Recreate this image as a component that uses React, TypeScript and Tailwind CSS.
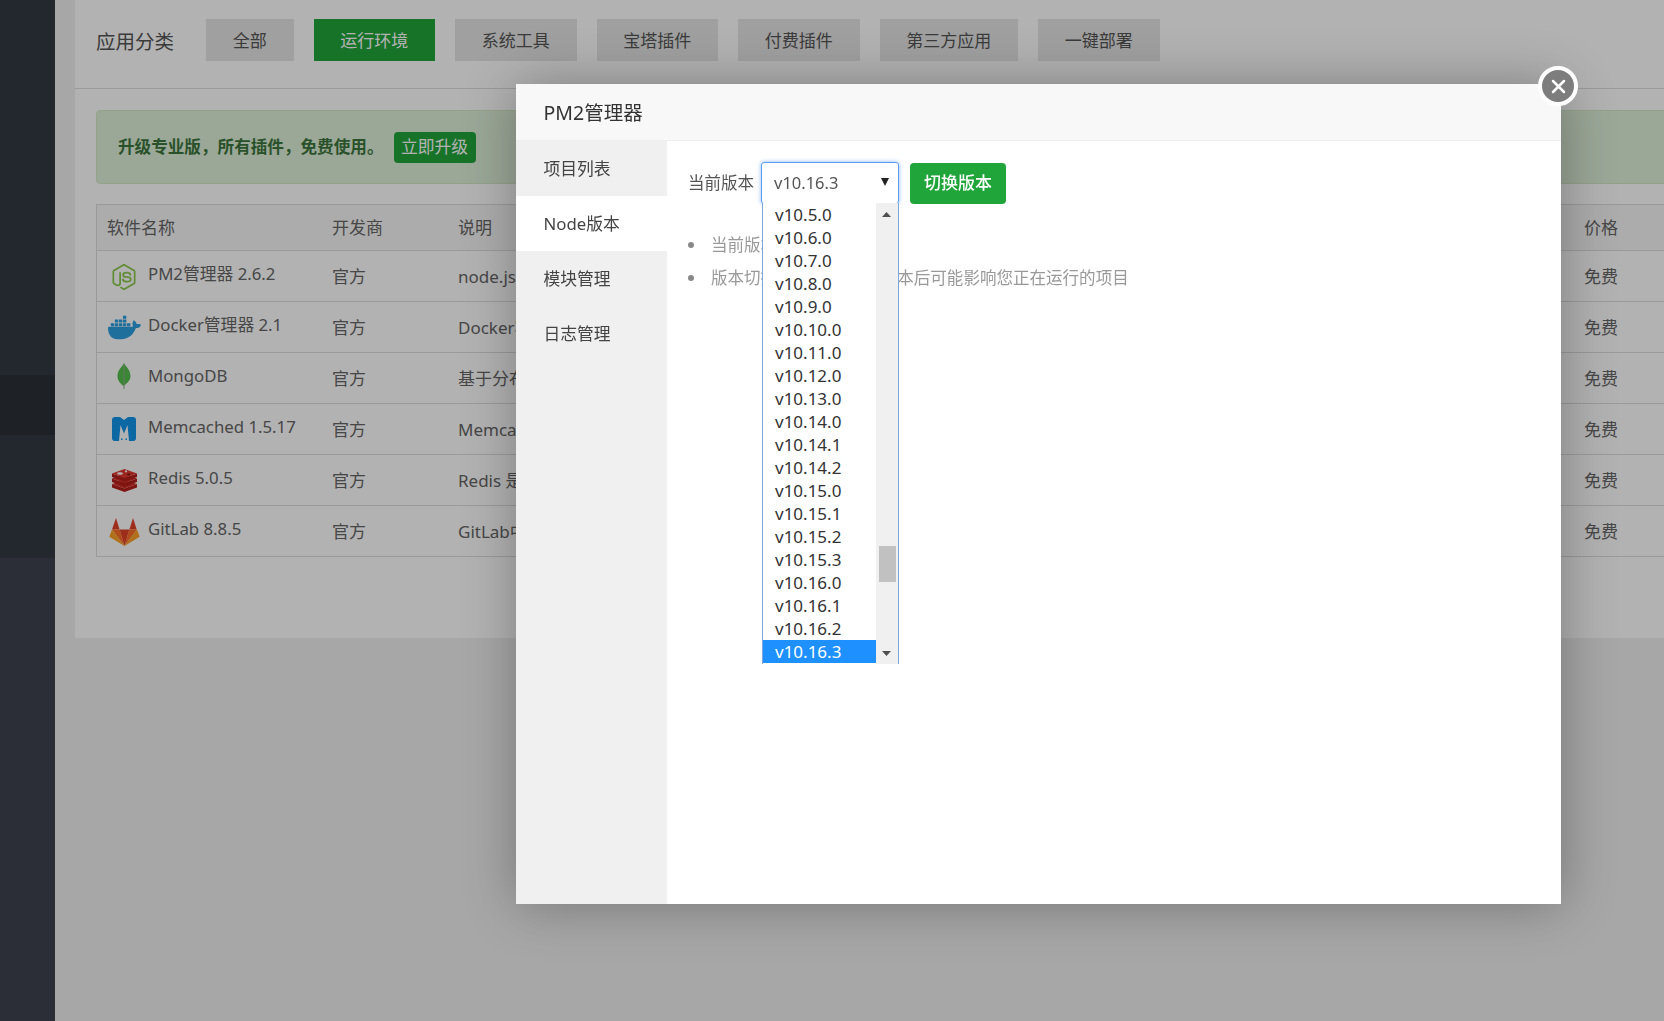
import React from "react";
import { SiDocker, SiNodedotjs } from "react-icons/si";

const font = { fontFamily: '"Noto Sans", "Noto Sans CJK SC", sans-serif' };

const categories = ["全部", "运行环境", "系统工具", "宝塔插件", "付费插件", "第三方应用", "一键部署"];

const versions = [
  "v10.5.0", "v10.6.0", "v10.7.0", "v10.8.0", "v10.9.0", "v10.10.0", "v10.11.0", "v10.12.0", "v10.13.0", "v10.14.0",
  "v10.14.1", "v10.14.2", "v10.15.0", "v10.15.1", "v10.15.2", "v10.15.3", "v10.16.0", "v10.16.1", "v10.16.2", "v10.16.3",
];

const tabs = ["项目列表", "Node版本", "模块管理", "日志管理"];

const MongoIcon = () => (
  <svg className="mb-[4px]" width="14" height="27" viewBox="0 0 14 27">
    <path d="M7 0C5 4 .5 7 .5 13c0 5 3.500 8 6 10 2.500-2 7-5 7-10C13.500 7 9 4 7 0z" fill="#54c04c" />
    <path d="M7 1v25" stroke="#8fa98c" strokeWidth="1" />
  </svg>
);

const MemcachedIcon = () => (
  <svg className="mb-[1px]" width="24" height="24" viewBox="0 0 24 24">
    <path
      d="M3 0h5l4 3 4-3h5a3 3 0 0 1 3 3v18a3 3 0 0 1-3 3h-4l-1.500-16L12 16.500 8.500 8 7 24H3a3 3 0 0 1-3-3V3a3 3 0 0 1 3-3z"
      fill="#1195e8"
    />
    <rect x="9" y="21.500" width="1.500" height="1.500" fill="#1195e8" />
    <rect x="13.500" y="21.500" width="1.500" height="1.500" fill="#1195e8" />
  </svg>
);

const RedisIcon = () => (
  <svg width="25" height="23" viewBox="0 0 25 23">
    <path d="M0 15l12.500 4.500L25 15v3.500L12.500 23 0 18.500z" fill="#b3201a" />
    <path d="M12.500 11L25 15l-12.500 4.500L0 15z" fill="#d22c26" />
    <path d="M0 9.500L12.500 14 25 9.500V13l-12.500 4.500L0 13z" fill="#b3201a" />
    <path d="M12.500 5.500L25 9.500 12.500 14 0 9.500z" fill="#d22c26" />
    <path d="M0 4.500L12.500 9 25 4.500V8l-12.500 4.500L0 8z" fill="#b3201a" />
    <path d="M12.500 0L25 4.500 12.500 9 0 4.500z" fill="#e0382f" />
    <ellipse cx="8" cy="4.500" rx="3" ry="1.300" fill="#fff" />
    <circle cx="14" cy="2.300" r="1.100" fill="#fff" />
    <path d="M14 5.500l4-1.300v2.200z" fill="#7a1410" />
  </svg>
);

const GitlabIcon = () => (
  <svg width="31" height="28" viewBox="0 0 100 92">
    <path d="M22 0l12 38H9z" fill="#e24329" />
    <path d="M78 0l12 38H66z" fill="#e24329" />
    <path d="M9 38H34L50 92z" fill="#fc6d26" />
    <path d="M91 38H66L50 92z" fill="#fc6d26" />
    <path d="M9 38L0 62 50 92z" fill="#fca326" />
    <path d="M91 38l9 24-50 30z" fill="#fca326" />
    <path d="M34 38H66L50 92z" fill="#e24329" />
  </svg>
);

const plugins = [
  { name: "PM2管理器 2.6.2", desc: "node.js进程管理器", icon: <SiNodedotjs size={26} color="#8cc84b" /> },
  { name: "Docker管理器 2.1", desc: "Docker容器管理", icon: <SiDocker size={33} color="#2d9fe0" /> },
  { name: "MongoDB", desc: "基于分布式文件存储的数据库", icon: <MongoIcon /> },
  { name: "Memcached 1.5.17", desc: "Memcached 是一个高性能的分布式内存对象缓存系统", icon: <MemcachedIcon /> },
  { name: "Redis 5.0.5", desc: "Redis 是一个高性能的key-value数据库", icon: <RedisIcon /> },
  { name: "GitLab 8.8.5", desc: "GitLab中文社区版", icon: <GitlabIcon /> },
];

const Triangle = ({ up, className }: { up?: boolean; className: string }) => (
  <svg className={className} viewBox="0 0 10 6" preserveAspectRatio="none">
    <path d={up ? "M5 0l5 6H0z" : "M0 0h10L5 6z"} />
  </svg>
);

export default function App() {
  return (
    <div className="relative flex h-screen overflow-hidden bg-[#f0f0f0] text-[#666]" style={font}>
      {/* sidebar */}
      <aside className="flex w-[55px] shrink-0 flex-col bg-[#333a44]">
        <div className="h-[375px]" />
        <div className="h-[60px] bg-[#2b3036]" />
        <div className="h-[123px]" />
        <div className="flex-1 bg-[#3e434e]" />
      </aside>

      <main className="min-w-0 flex-1 pl-[20px]">
        <div className="h-[638px] bg-white">
          <div className="flex h-[89px] items-start border-b border-[#ddd] pt-[19px] pl-[21px]">
            <span className="mr-[32px] flex h-[42px] items-center pt-[3px] text-[19.500px] text-[#555]">应用分类</span>
            <div className="flex gap-[20px]">
              {categories.map((c) => (
                <div
                  key={c}
                  className={`flex h-[42px] items-center px-[26.750px] pt-[1px] text-[17px] ${
                    c === "运行环境" ? "bg-[#20a53a] text-white" : "bg-[#e5e5e5] text-[#555]"
                  }`}
                >
                  {c}
                </div>
              ))}
            </div>
          </div>

          <div className="pl-[21px]">
            <div className="mt-[21px] mr-[-20px] flex h-[74px] items-center rounded border border-[#d6e9c6] bg-[#dff0d8] pl-[21px]">
              <span className="pt-[1px] text-[16.600px] font-bold text-[#3c763d]">升级专业版，所有插件，免费使用。</span>
              <span className="ml-[10px] flex h-[31px] items-center rounded bg-[#20a53a] px-[7.500px] text-[16.800px] text-white">
                立即升级
              </span>
            </div>

            <div className="mt-[20px] mr-[-20px] border border-[#ddd] text-[17px]">
              <div className="grid h-[45px] grid-cols-[225px_126px_1126px_1fr] items-center bg-[#f6f6f6] pt-[1px] pl-[10px]">
                <span>软件名称</span>
                <span>开发商</span>
                <span>说明</span>
                <span>价格</span>
              </div>
              {plugins.map((p) => (
                <div
                  key={p.name}
                  className="grid h-[51px] grid-cols-[225px_126px_1126px_1fr] items-center border-t border-[#ddd] pt-[1px] pl-[10px]"
                >
                  <div className="flex items-center">
                    <span className="flex w-[34px] shrink-0 justify-center">{p.icon}</span>
                    <span className="mb-[5px] ml-[7px] text-[16.800px]">{p.name}</span>
                  </div>
                  <span>官方</span>
                  <span className="truncate">{p.desc}</span>
                  <span>免费</span>
                </div>
              ))}
            </div>
          </div>
        </div>
      </main>

      {/* layer shade */}
      <div className="fixed inset-0 bg-black/30" />

      {/* modal */}
      <div className="absolute top-[84px] left-[516px] flex h-[820px] w-[1045px] flex-col bg-white text-[#555] shadow-[1px_1px_50px_rgba(0,0,0,0.3)]">
        <div className="flex h-[57px] shrink-0 items-center border-b border-[#eee] bg-[#f8f8f8] pt-[1px] pl-[27.500px] text-[19.500px] text-[#333]">
          PM2管理器
        </div>
        <button className="absolute top-[-18px] right-[-17px] flex h-[40px] w-[40px] items-center justify-center rounded-full border-[4px] border-white bg-[#7d7d7d]">
          <svg width="15" height="15" viewBox="0 0 15 15">
            <path d="M2 2l11 11M13 2L2 13" stroke="#fff" strokeWidth="2.500" strokeLinecap="round" />
          </svg>
        </button>
        <div className="flex min-h-0 flex-1">
          <div className="w-[151px] shrink-0 bg-[#f0f0f0]">
            {tabs.map((t) => (
              <div
                key={t}
                className={`flex h-[55px] items-center pt-[1px] pl-[27.500px] text-[16.800px] text-[#444] ${
                  t === "Node版本" ? "bg-white" : ""
                }`}
              >
                {t}
              </div>
            ))}
          </div>

          <div className="flex-1 pt-[21px] pl-[21px]">
            <div className="flex items-center">
              <span className="w-[73px] text-[16.500px]">当前版本</span>
              <div className="relative h-[42px] w-[138px]">
                <div className="flex h-full items-center rounded-[3px] border border-[#5b9bf0] pl-[12px] text-[16.500px] text-[#555] shadow-[0_0_4px_rgba(91,155,240,0.7)]">
                  v10.16.3
                </div>
                <Triangle className="absolute top-[16px] right-[10px] h-[8px] w-[8px] fill-[#222]" />
                <div className="absolute top-[41px] left-[1px] z-10 flex h-[461px] w-[137px] border-x border-[#7fa5dc] bg-white text-[17px] leading-[23px] text-[#333]">
                  <div className="w-[113px] shrink-0">
                    {versions.map((v) => (
                      <div key={v} className={`h-[23px] pl-[12px] ${v === "v10.16.3" ? "bg-[#1e90ff] text-white" : ""}`}>
                        {v}
                      </div>
                    ))}
                  </div>
                  <div className="relative flex-1 bg-[#f0f0f0]">
                    <Triangle up className="absolute top-[9px] left-[6px] h-[5px] w-[9px] fill-[#505050]" />
                    <div className="absolute top-[343px] left-[3px] h-[36px] w-[17px] bg-[#c1c1c1]" />
                    <Triangle className="absolute bottom-[8px] left-[6px] h-[5px] w-[9px] fill-[#505050]" />
                  </div>
                </div>
              </div>
              <span className="ml-[11px] flex h-[41px] w-[96px] items-center justify-center rounded bg-[#20a53a] text-[17px] font-medium text-white">
                切换版本
              </span>
            </div>

            <ul className="mt-[24px] text-[16.550px] leading-[33px] text-[#999]">
              <li className="flex items-center">
                <span className="mr-[17px] h-[6px] w-[6px] shrink-0 rounded-full bg-[#888]" />
                当前版本：v10.16.3
              </li>
              <li className="flex items-center">
                <span className="mr-[17px] h-[6px] w-[6px] shrink-0 rounded-full bg-[#888]" />
                版本切换是全局的,切换版本后可能影响您正在运行的项目
              </li>
            </ul>
          </div>
        </div>
      </div>
    </div>
  );
}
